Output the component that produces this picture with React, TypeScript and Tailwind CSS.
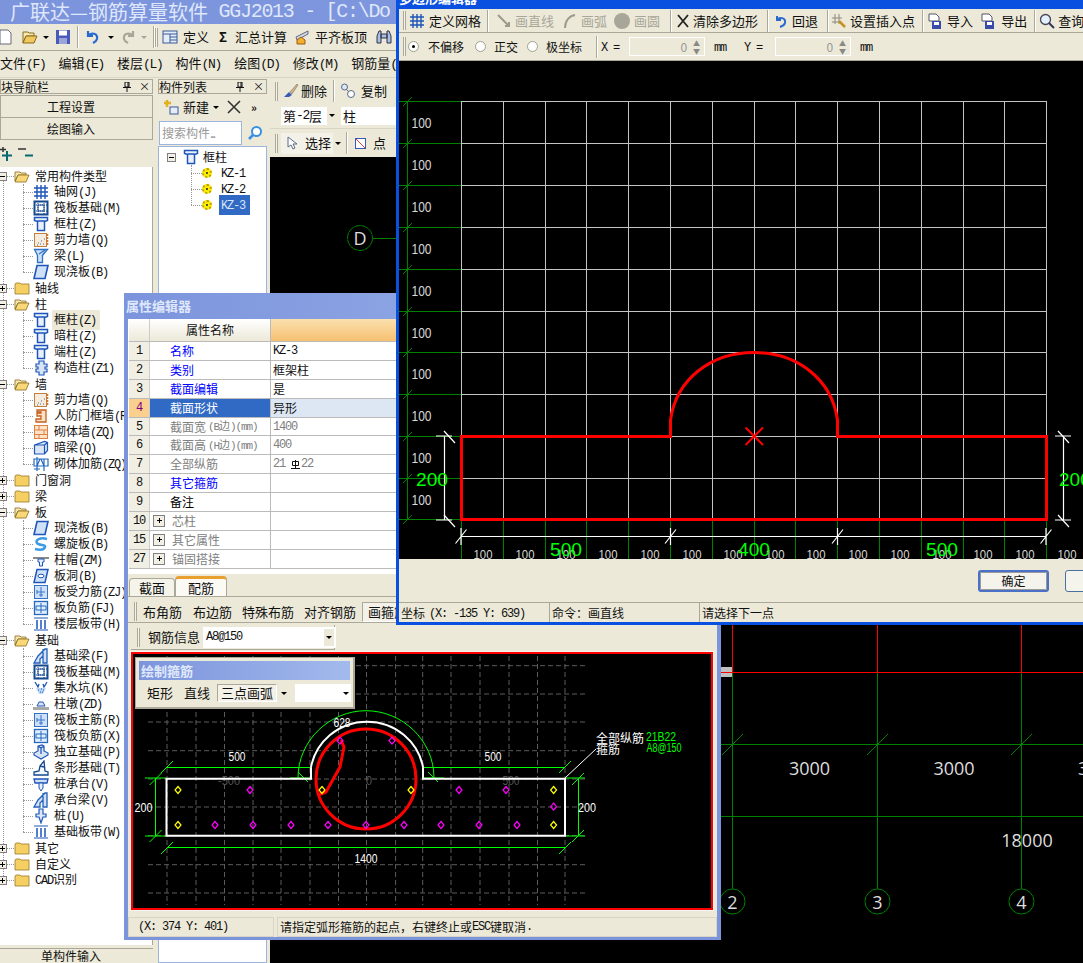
import React from 'react'

const M = ({ children }: { children: React.ReactNode }) => (
  <span className="whitespace-pre font-['Liberation_Mono',monospace] tracking-[-0.1em]">{children}</span>
)

const B = '#1f55b8'
const L = '#cfe0f8'

const icons: Record<string, React.ReactNode> = {
  grid: <path d="M4 1v14M8 1v14M12 1v14M1 4h14M1 8h14M1 12h14" stroke={B} strokeWidth="1.4" fill="none" />,
  raft: <g fill="none" stroke="#14488f"><rect x="1.5" y="1.5" width="13" height="13" strokeWidth="2" /><rect x="5" y="5" width="6" height="6" /><path d="M5 1v14M11 1v14M1 5h14M1 11h14" strokeDasharray="1 1" /></g>,
  column: <path d="M1.5 1.5h13v3l-3 1v9h-7v-9l-3-1zM4.500 5h7" fill="#e8f0fc" stroke={B} strokeWidth="1.5" />,
  wall: <g><rect x="1.500" y="1.500" width="12" height="13" fill="#f5ece0" stroke="#c08040" /><path d="M5 11h1M8 9h1M10 12h1M7 12h1M11 7h1M4 13h1" stroke="#666" /><path d="M14.500 2v12" stroke="#e07020" strokeWidth="1.500" strokeDasharray="2 1" /></g>,
  beam: <path d="M1.500 1.500h13l-5 6v7h-5v-7zM6 6l6-4M9 8l3-4" fill={L} stroke="#2c72c8" strokeWidth="1.300" />,
  slab: <path d="M4 1.500h11l-3 13H1z" fill={L} stroke={B} strokeWidth="1.600" />,
  construct: <path d="M6 1h5v3h3v3h-2v2h2v3h-3v3H6v-3H3V9h2V7H3V4h3z" fill="#d8e4f6" stroke={B} strokeWidth="1.200" />,
  door: <path d="M4 2h9v12H3v-3h5V8H4V5h4V4H4z" fill="#f7e2c8" stroke="#c8601c" strokeWidth="1.300" />,
  brick: <g fill="#fbe3cc" stroke="#e08040"><rect x="1.500" y="1.500" width="13" height="13" /><path d="M1 6h14M1 10.500h14M6 1.500V6M11 6v4.500M6 10.500v4" fill="none" /></g>,
  lintel: <path d="M1.500 5l10-3.500 3 1v8l-3 3.500h-10zM1.500 5h10v9M11.500 5l3-2.500" fill="#dbe7f7" stroke={B} strokeWidth="1.200" />,
  rebarwall: <path d="M1 3h14v7H1zM4 1v14M11 3v12M7 3l-3 7M8 3l3 7M1 13h6" fill="none" stroke="#2468c0" strokeWidth="1.200" />,
  spiral: <path d="M14 3C7 1 2 4 4 7s9 1 8 4-6 3-10 2" fill="none" stroke="#3d9be8" strokeWidth="2.500" />,
  cap: <g><path d="M0 5h16v2H0z" fill="#8a8a8a" /><path d="M5 7h6v3H9.500v4h-3v-4H5z" fill="#e6effb" stroke={B} /></g>,
  hole: <g><path d="M4 1.500h11l-3 13H1z" fill={L} stroke={B} strokeWidth="1.500" /><ellipse cx="8" cy="8" rx="3" ry="1.800" fill="#fff" stroke={B} /></g>,
  rebar1: <g fill="none" stroke="#3272c8"><rect x="1.500" y="1.500" width="13" height="13" fill={L} /><path d="M8 3v10M4 8h8M4 6v4M6 11h4" /></g>,
  rebarneg: <g fill="none" stroke="#2468c0"><rect x="1.500" y="1.500" width="13" height="13" fill="#e4eefb" strokeWidth="1.300" /><path d="M3 6h10M3 10h10M8 3v10M3 6v4M13 6v4" /></g>,
  strip: <g stroke={B} fill="none"><path d="M1 2h14M1 14h14" /><path d="M4 4v9M8 4v9M12 4v9" strokeWidth="1.500" /></g>,
  fbeam: <path d="M1 15l4-7 7-7h2v14h-4V8l-3 3v4zM10 1v7" fill={L} stroke="#2160b8" strokeWidth="1.300" />,
  pit: <g><path d="M2 2l3 5 1-3M14 2l-3 5-1-3" fill="none" stroke={B} strokeWidth="1.300" /><path d="M3 8h10l-3 6H6z" fill="#bcd6f5" /><path d="M5 10h1M8 9h1M10 10h1M7 12h1M9 12h1" stroke={B} /></g>,
  pier: <g><path d="M6 6h4l2 4H4z" fill="#d8e4f6" stroke={B} /><path d="M0 11h16v3H0z" fill="#a8a8a8" /></g>,
  isolated: <path d="M5 2l4-1 2 1v5l4 2v2l-7 4-7-4V9l4-2zM5 2l3 2v6M8 4l3-2" fill="#d8e4f6" stroke={B} strokeWidth="1.200" />,
  stripf: <path d="M1 15v-3l5-1 1-5 4-5 1 10 3 1v3zM7 6l4 1" fill="#f4f7fd" stroke="#14488f" strokeWidth="1.300" />,
  pilecap: <g><path d="M1 3h14l-1 4H2z" fill={L} stroke={B} strokeWidth="1.300" /><path d="M6 7h4v5l-2 3-2-3z" fill="#e6effb" stroke={B} /></g>,
  pile: <path d="M6 1h4v5h3v3h-3l-2 6-2-6H3V6h3z" fill="#dbe7f7" stroke={B} strokeWidth="1.200" />,
}

const Icon = ({ name }: { name: string }) => (
  <svg viewBox="0 0 16 16" className="h-4 w-4 shrink-0">{icons[name]}</svg>
)

const Folder = ({ open }: { open: boolean }) => (
  <svg viewBox="0 0 16 14" className="h-[14px] w-4 shrink-0">
    {open ? (
      <g stroke="#8a6a1c" strokeWidth="0.800">
        <path d="M1 3h5l1 1h5v2H4L1 12z" fill="#f6e8b0" />
        <path d="M4 6h11l-3 7H1z" fill="#f8d878" />
      </g>
    ) : (
      <path d="M1 3l1-1h4l1 1h8v10H1z" fill="#f6cf62" stroke="#9a7a28" strokeWidth="0.800" />
    )}
  </svg>
)

const Expander = ({ plus, className = '' }: { plus: boolean; className?: string }) => (
  <span className={`relative flex h-[9px] w-[9px] shrink-0 items-center justify-center border border-[#808080] bg-[#f2efe4] ${className}`}>
    <span className="h-px w-[5px] bg-black" />
    {plus && <span className="absolute h-[5px] w-px bg-black" />}
  </span>
)

type Child = [string, string, string]
type Group = { name: string; open?: boolean; items?: Child[] }

const tree: Group[] = [
  { name: '常用构件类型', open: true, items: [['grid', '轴网', '(J)'], ['raft', '筏板基础', '(M)'], ['column', '框柱', '(Z)'], ['wall', '剪力墙', '(Q)'], ['beam', '梁', '(L)'], ['slab', '现浇板', '(B)']] },
  { name: '轴线' },
  { name: '柱', open: true, items: [['column', '框柱', '(Z)'], ['column', '暗柱', '(Z)'], ['column', '端柱', '(Z)'], ['construct', '构造柱', '(Z1)']] },
  { name: '墙', open: true, items: [['wall', '剪力墙', '(Q)'], ['door', '人防门框墙', '(RF)'], ['brick', '砌体墙', '(ZQ)'], ['lintel', '暗梁', '(Q)'], ['rebarwall', '砌体加筋', '(ZQ)']] },
  { name: '门窗洞' },
  { name: '梁' },
  { name: '板', open: true, items: [['slab', '现浇板', '(B)'], ['spiral', '螺旋板', '(B)'], ['cap', '柱帽', '(ZM)'], ['hole', '板洞', '(B)'], ['rebar1', '板受力筋', '(ZJ)'], ['rebarneg', '板负筋', '(FJ)'], ['strip', '楼层板带', '(H)']] },
  { name: '基础', open: true, items: [['fbeam', '基础梁', '(F)'], ['raft', '筏板基础', '(M)'], ['pit', '集水坑', '(K)'], ['pier', '柱墩', '(ZD)'], ['rebar1', '筏板主筋', '(R)'], ['rebarneg', '筏板负筋', '(X)'], ['isolated', '独立基础', '(P)'], ['stripf', '条形基础', '(T)'], ['pilecap', '桩承台', '(V)'], ['fbeam', '承台梁', '(V)'], ['pile', '桩', '(U)'], ['strip', '基础板带', '(W)']] },
  { name: '其它' },
  { name: '自定义' },
  { name: 'CAD识别' },
]

const Grip = () => <span className="h-[19px] w-[3px] shrink-0 border-x border-[#aca899] bg-[#f6f4ea]" />
const Sep = ({ className = '' }: { className?: string }) => <span className={`h-[22px] w-0.5 shrink-0 border-x border-l-[#aca899] border-r-white ${className}`} />
const Caret = ({ className = '' }: { className?: string }) => <span className={`h-0 w-0 shrink-0 border-x-[3px] border-t-[3px] border-x-transparent border-t-black ${className}`} />

const PanelHead = ({ title, pin, close }: { title: string; pin: string; close: string }) => (
  <div className="relative flex h-[15px] shrink-0 items-center overflow-hidden border border-[#aca899] text-[12px] leading-none">
    <span>{title}</span>
    <svg viewBox="0 0 8 10" className={`absolute ${pin} h-[10px] w-2`}><path d="M2 0h4v5H2zM0 5.500h8M4 6v4M5 0v5" stroke="#111" fill="none" /></svg>
    <span className={`absolute ${close} text-[11px]`}>×</span>
  </div>
)

// cad text squeezed to the width it has in the picture
const Dim = ({ x, y, w, s = 13, fill = '#d8d8d8', children }: { x: number; y: number; w: number; s?: number; fill?: string; children: string }) => (
  <text x={x} y={y} textLength={w} lengthAdjust="spacingAndGlyphs" textAnchor="middle" dominantBaseline="central" fontSize={s} fill={fill} fontFamily="Liberation Sans, sans-serif">
    {children}
  </text>
)

const Tick = ({ x, y, r = 6, c = '#00ff00' }: { x: number; y: number; r?: number; c?: string }) => (
  <line x1={x - r} y1={y + r} x2={x + r} y2={y - r} stroke={c} strokeWidth="1" />
)

function MainCanvas() {
  const cols = [732.500, 877.500, 1021.500]
  return (
    <svg viewBox="270 157 813 806" className="h-full w-full">
      <circle cx="360" cy="238" r="12.500" fill="none" stroke="#008000" strokeDasharray="7 0.500" />
      <text x="360" y="238" textAnchor="middle" dominantBaseline="central" fontSize="18" fill="#ddd" fontFamily="Open Sans, sans-serif">D</text>
      <line x1="372.500" y1="238.500" x2="400" y2="238.500" stroke="#008000" />
      {[744.500, 816.500].map(y => <line key={y} x1="721" y1={y} x2="1083" y2={y} stroke="#008000" />)}
      {cols.map(x => (
        <g key={x}>
          <line x1={x} y1="625" x2={x} y2="672.500" stroke="#ff0000" />
          <line x1={x} y1="672.500" x2={x} y2="889" stroke="#008000" />
          <Tick x={x} y={744.500} r={10.500} c="#008000" />
          <circle cx={x} cy="901.500" r="12.500" fill="none" stroke="#008000" />
        </g>
      ))}
      <rect x="721" y="667" width="11" height="10" fill="#c0c0c0" />
      <line x1="721" y1="672.500" x2="1083" y2="672.500" stroke="#ff0000" />
      {[[809.500, '3000'], [954, '3000']].map(([x, t]) => (
        <text key={x} x={x} y="768" textAnchor="middle" dominantBaseline="central" fontSize="18" fill="#ddd" fontFamily="Open Sans, sans-serif">{t}</text>
      ))}
      <text x="1078" y="768" dominantBaseline="central" fontSize="18" fill="#ddd" fontFamily="Open Sans, sans-serif">3</text>
      <text x="1027" y="840" textAnchor="middle" dominantBaseline="central" fontSize="18" fill="#ddd" fontFamily="Open Sans, sans-serif">18000</text>
      {['2', '3', '4'].map((t, i) => (
        <text key={t} x={cols[i]} y="901.500" textAnchor="middle" dominantBaseline="central" fontSize="18" fill="#ddd" fontFamily="Open Sans, sans-serif">{t}</text>
      ))}
    </svg>
  )
}

function PolygonCanvas() {
  const xs = [461.500, 503.500, 545.500, 586.500, 628.500, 670.500, 712.500, 754.500, 795.500, 837.500, 879.500, 921.500, 963.500, 1004.500, 1046.500]
  const ys = [101.500, 143.500, 185.500, 227.500, 269.500, 311.500, 352.500, 394.500, 436.500, 478.500, 519.500]
  const bottom = [483, 525, 566, 608, 650, 692, 733, 775, 816, 858, 900, 942, 983, 1025, 1067]
  return (
    <svg viewBox="399 61 686 498" className="h-full w-full">
      <line x1="407.500" y1="101" x2="407.500" y2="520" stroke="#008000" />
      {ys.map((y, i) => (
        <g key={y}>
          <line x1="399" y1={y} x2="461" y2={y} stroke="#008000" />
          <line x1="461" y1={y} x2="1046.500" y2={y} stroke="#c4c4c4" />
          <Tick x={407.500} y={y} r={4.500} c="#008000" />
          {i < ys.length - 1 && <Dim x={421.500} y={y + 21} w={20} s={14}>100</Dim>}
        </g>
      ))}
      {xs.map(x => (
        <g key={x}>
          <line x1={x} y1="101" x2={x} y2="520" stroke="#c4c4c4" />
          <line x1={x} y1="520" x2={x} y2="559" stroke="#008000" />
        </g>
      ))}
      {bottom.map(x => <Dim key={x} x={x} y={554} w={19} s={13}>100</Dim>)}
      <path d="M461.500 436.500H670.500V420C676 380 710 352.500 754 352.500C798 352.500 832 380 837.500 420V436.500H1046.500V519.500H461.500Z" fill="none" stroke="#ff0000" strokeWidth="3" />
      <path d="M745.500 427.500l17.500 17.500M763 427.500l-17.500 17.500" stroke="#ff0000" strokeWidth="2" />
      <g stroke="#fff" strokeWidth="1.200">
        <line x1="461" y1="536.500" x2="1046" y2="536.500" />
        <line x1="444.500" y1="436" x2="444.500" y2="520" />
        <line x1="1063.500" y1="436" x2="1063.500" y2="520" />
        <path d="M436 436h16M436 520h16M1055 436h16M1055 520h16" />
        <path d="M444 431l11 12M444 515l11 12M1058 431l11 12M1058 515l11 12" />
        {[461, 670.500, 837.500, 1046].map(x => <path key={x} d={`M${x - 5.500} ${543.500}l11 -14M${x} 528v17`} />)}
      </g>
      <Dim x={566} y={549} w={32} s={19} fill="#00ff00">500</Dim>
      <Dim x={754} y={549} w={32} s={19} fill="#00ff00">400</Dim>
      <Dim x={942} y={549} w={32} s={19} fill="#00ff00">500</Dim>
      <Dim x={432} y={479} w={32} s={19} fill="#00ff00">200</Dim>
      <text x="1059" y="479" dominantBaseline="central" fontSize="19" fill="#00ff00" fontFamily="Liberation Sans, sans-serif">200</text>
    </svg>
  )
}

function SectionCanvas() {
  const vs = [167, 196, 224.500, 253, 281, 310, 338.500, 366.500, 395.600, 422.700, 451, 480, 509, 537.500, 565]
  const hs = [665.700, 694, 722, 750.700, 779, 807, 835.700, 864.700, 893]
  const yellow = [[178, 790], [178, 825], [322, 790], [411, 790], [553.600, 790], [553.600, 825]]
  const magenta = [[250, 790], [340, 740.700], [392, 740.700], [459, 790], [506, 790], [553.600, 806.700], [215, 825], [253, 825], [291, 825], [328, 825], [366, 825], [404, 825], [441, 825], [479, 825], [517, 825]]
  return (
    <svg viewBox="133 654 578 254" className="h-full w-full">
      <g stroke="#5c5c5c" strokeDasharray="5 3">
        {vs.map(x => <line key={x} x1={x} y1="656" x2={x} y2="905" />)}
        {hs.map(y => <line key={y} x1="148" y1={y} x2="585" y2={y} />)}
      </g>
      <Dim x={229} y={781} w={22} s={12} fill="#555">-500</Dim>
      <Dim x={369} y={781} w={6} s={12} fill="#555">0</Dim>
      <Dim x={511} y={781} w={17} s={12} fill="#555">500</Dim>
      <g fill="none" stroke="#00ff00">
        <path d="M167 767.500H311M423 767.500H565M167 847.500H565M155.500 778V836M578.500 778V836M145 778H166M145 836H166M566 778H585M566 836H585" />
        <path d="M298 778C298 740 330 710.700 366 710.700C402 710.700 434 740 434 778" />
        <path d="M290 778h22M422 778h22" />
      </g>
      {[[167, 767], [565, 767], [167, 848], [565, 848], [155.600, 779], [155.600, 836], [578, 779], [578, 836]].map(([x, y]) => <Tick key={`${x}${y}`} x={x} y={y} />)}
      <path d="M298 772l10 10M428 772l10 10" stroke="#00ff00" />
      <path d="M166.500 778.700H311V767C316 742 338 721.700 367 721.700C396 721.700 418 742 423 767V778.700H565V835.700H166.500Z" fill="none" stroke="#fff" strokeWidth="2" />
      <circle cx="366" cy="779" r="50" fill="none" stroke="#ff0000" strokeWidth="3" />
      <path d="M341 740L344 747L340 767L326 792L318 795" fill="none" stroke="#ff0000" strokeWidth="3" />
      {yellow.map(([x, y]) => <path key={`${x}${y}`} d={`M${x} ${y - 3.500}l3 3.500l-3 3.500l-3 -3.500z`} fill="none" stroke="#ffff00" strokeWidth="1.200" />)}
      {magenta.map(([x, y]) => <path key={`${x}${y}`} d={`M${x} ${y - 3.500}l3 3.500l-3 3.500l-3 -3.500z`} fill="none" stroke="#ff00ff" strokeWidth="1.200" />)}
      <line x1="565" y1="778" x2="596" y2="749" stroke="#fff" />
      <Dim x={237} y={756} w={17} s={13} fill="#fff">500</Dim>
      <Dim x={493} y={756} w={17} s={13} fill="#fff">500</Dim>
      <Dim x={342} y={722} w={17} s={13} fill="#fff">628</Dim>
      <Dim x={143.500} y={807} w={18} s={13} fill="#fff">200</Dim>
      <Dim x={587} y={807} w={18} s={13} fill="#fff">200</Dim>
      <Dim x={366} y={858} w={23} s={13} fill="#fff">1400</Dim>
      <text x="596" y="737" dominantBaseline="central" fontSize="12" fill="#fff">全部纵筋</text>
      <text x="596" y="748" dominantBaseline="central" fontSize="12" fill="#fff">箍筋</text>
      <Dim x={661} y={737} w={30} s={12} fill="#00ff00">21B22</Dim>
      <Dim x={664} y={748} w={35} s={12} fill="#00ff00">A8@150</Dim>
    </svg>
  )
}

const rows: { n: string; name: string; value?: React.ReactNode; tone: string; plus?: boolean; active?: boolean; valueTone?: string }[] = [
  { n: '1', name: '名称', value: <M>KZ-3</M>, tone: 'text-[#0000ff]' },
  { n: '2', name: '类别', value: '框架柱', tone: 'text-[#0000ff]' },
  { n: '3', name: '截面编辑', value: '是', tone: 'text-[#0000ff]' },
  { n: '4', name: '截面形状', value: '异形', tone: 'text-white', active: true },
  { n: '5', name: '截面宽', value: <M>1400</M>, tone: 'text-[#808080]', valueTone: 'text-[#808080]' },
  { n: '6', name: '截面高', value: <M>400</M>, tone: 'text-[#808080]', valueTone: 'text-[#808080]' },
  {
    n: '7',
    name: '全部纵筋',
    value: (
      <>
        <M>21 </M>
        <svg viewBox="0 0 9 9" className="mr-px h-[9px] w-[9px]"><path d="M1.500 1.500h6v4h-6zM4.500 0v8.500M0 8.500h9" fill="none" stroke="#111" /></svg>
        <M>22</M>
      </>
    ),
    tone: 'text-[#808080]',
    valueTone: 'text-[#808080]',
  },
  { n: '8', name: '其它箍筋', tone: 'text-[#0000ff]' },
  { n: '9', name: '备注', tone: 'text-black' },
  { n: '10', name: '芯柱', tone: 'text-[#808080]', plus: true },
  { n: '15', name: '其它属性', tone: 'text-[#808080]', plus: true },
  { n: '27', name: '锚固搭接', tone: 'text-[#808080]', plus: true },
]

function PropertyWindow() {
  return (
    <div className="absolute left-[124px] top-[293px] flex h-[647px] w-[597px] flex-col border-x-4 border-b-[3px] border-[#7c94dc] bg-[#ece9d8]">
      <div className="-ml-[2px] flex h-[26px] shrink-0 items-center bg-gradient-to-r from-[#7c94dc] to-[#9db5ea] text-[13px] font-bold text-[#dfe7fb]">属性编辑器</div>
      <div className="h-[255px] shrink-0 bg-white pl-px">
        <div className="flex h-[23px] border-b border-[#bbb]">
          <div className="w-[21px] border-r border-[#ccc] bg-gradient-to-b from-white to-[#ece9d8]" />
          <div className="flex w-[121px] items-center justify-center border-r border-[#bbb] bg-gradient-to-b from-white to-[#ece9d8] text-[12px]">属性名称</div>
          <div className="flex-1 bg-gradient-to-b from-[#fbe0ae] to-[#f6c070]" />
        </div>
        {rows.map(r => (
          <div key={r.n} className="flex h-[18.9px] border-b border-[#bbb] text-[12px]">
            <div className={`flex w-[21px] items-center justify-center border-r border-[#ccc] ${r.active ? 'bg-[#fbd08f] text-[#800080]' : 'bg-[#f1efe4]'}`}><M>{r.n}</M></div>
            <div className={`flex w-[121px] items-center border-r border-[#bbb] ${r.active ? 'bg-[#316ac5]' : ''} ${r.tone}`}>
              {r.plus ? (
                <Expander plus className="ml-[3px] mr-[7px] !h-[12px] !w-[12px]" />
              ) : (
                <span className="w-[20px] shrink-0" />
              )}
              {r.name}
              {r.n === '5' && <span className="ml-0.5 text-[11px]"><M>(B</M>边<M>)(mm)</M></span>}
              {r.n === '6' && <span className="ml-0.5 text-[11px]"><M>(H</M>边<M>)(mm)</M></span>}
            </div>
            <div className={`flex flex-1 items-center pl-0.5 ${r.active ? 'bg-[#dde7f3]' : ''} ${r.valueTone ?? ''}`}>{r.value}</div>
          </div>
        ))}
      </div>
      <div className="mt-[3px] flex h-[20px] shrink-0 items-end border-b border-[#aca899] pl-px text-[13px]">
        <div className="flex h-[18px] w-[46px] items-center justify-center rounded-t border border-b-0 border-[#aca899] bg-[#f5f4ea]">截面</div>
        <div className="flex h-[20px] w-[52px] items-center justify-center rounded-t border-t-[3px] border-x border-[#e8a030] border-x-[#aca899] bg-[#fbfaf4]">配筋</div>
      </div>
      <div className="mt-1 flex h-[22px] shrink-0 items-center border-b border-[#aca899] pl-[6px] text-[13px]">
        <Grip />
        <span className="ml-[6px]">布角筋</span>
        <span className="ml-[11px]">布边筋</span>
        <span className="ml-[10px]">特殊布筋</span>
        <span className="ml-[10px]">对齐钢筋</span>
        <span className="ml-1.5 flex h-[20px] items-center border border-white border-l-[#aca899] border-t-[#aca899] bg-[#f4f2e8] px-[5px]">画箍筋</span>
      </div>
      <div className="ml-[3px] mt-0.5 flex h-[25px] w-[204px] shrink-0 items-center border-b border-r border-[#aca899] pl-[6px] text-[13px]">
        <Grip />
        <span className="ml-2">钢筋信息</span>
        <div className="ml-[3px] flex h-[21px] w-[133px] shrink-0 items-center justify-between bg-white pl-[3px] pr-[2px] text-[12px]">
          <M>A8@150</M>
          <span className="flex h-[17px] w-[10px] items-center justify-center bg-[#ece9d8]"><Caret /></span>
        </div>
      </div>
      <div className="relative ml-[3px] mt-0.5 h-[258px] w-[582px] shrink-0 border-2 border-[#ff0000] bg-black outline outline-1 outline-[#f4f4f4]">
        <SectionCanvas />
        <div className="absolute left-[2px] top-[3px] h-[52px] w-[220px] border border-b-2 border-r-2 border-[#aca899] bg-[#ece9d8] p-[3px]">
          <div className="flex h-[19px] items-center bg-gradient-to-r from-[#7c94dc] to-[#a2baec] pl-0.5 text-[13px] font-bold text-[#dfe7fb]">绘制箍筋</div>
          <div className="flex h-[26px] items-center pl-[8px] text-[13px]">
            <span>矩形</span>
            <span className="ml-[11px]">直线</span>
            <span className="ml-[7px] flex h-[18px] w-[60px] shrink-0 items-center justify-center border border-white border-l-[#aca899] border-t-[#aca899] bg-[#f4f2e8]">三点画弧</span>
            <Caret className="ml-1" />
            <div className="ml-2 flex h-[18px] w-[56px] shrink-0 items-center justify-end bg-white pr-0.5"><Caret /></div>
          </div>
        </div>
      </div>
      <div className="mt-[7px] flex h-[20px] shrink-0 text-[12px]">
        <div className="flex w-[146px] items-center border border-[#d8d5c4] pl-[9px]"><M>(X: 374 Y: 401)</M></div>
        <div className="ml-[3px] flex flex-1 items-center border border-[#d8d5c4] pl-0.5">请指定弧形箍筋的起点，右键终止或<M>ESC</M>键取消<M>.</M></div>
      </div>
    </div>
  )
}

const GridIcon = () => <svg viewBox="0 0 16 16" className="h-4 w-4">{icons.grid}</svg>

function PolygonWindow() {
  return (
    <div className="absolute left-[396px] top-[-14px] flex h-[639px] w-[692px] flex-col border-x-[3px] border-b-[3px] border-[#0a50e0] bg-[#ece9d8]">
      <div className="flex h-[23px] shrink-0 items-center bg-[#0a50e0] text-[13px] font-bold text-white">多边形编辑器</div>
      <div className="flex h-[24px] shrink-0 items-center border-b border-[#aca899] pl-[4px] text-[13px]">
        <Grip />
        <span className="ml-[3px]"><GridIcon /></span>
        <span className="ml-1">定义网格</span>
        <Sep className="ml-1.5" />
        <svg viewBox="0 0 16 16" className="ml-[7px] h-4 w-4"><path d="M2 2l10 10M9 13h4V9" stroke="#9c9a8c" strokeWidth="2" fill="none" /></svg>
        <span className="ml-[3px] text-[#a8a698]">画直线</span>
        <svg viewBox="0 0 16 16" className="ml-[8px] h-4 w-4"><path d="M3 15C3 8 7 3 13 2" stroke="#9c9a8c" strokeWidth="2" fill="none" /></svg>
        <span className="ml-[3px] text-[#a8a698]">画弧</span>
        <span className="ml-[7px] h-4 w-4 rounded-full bg-[#a8a698]" />
        <span className="ml-1 text-[#a8a698]">画圆</span>
        <Sep className="ml-[10px]" />
        <svg viewBox="0 0 16 16" className="ml-[3px] h-4 w-4"><path d="M3 2l10 12M13 2L3 14" stroke="#222" strokeWidth="1.800" /></svg>
        <span className="ml-[2px]">清除多边形</span>
        <Sep className="ml-[9px]" />
        <svg viewBox="0 0 16 16" className="ml-1 h-4 w-4"><path d="M4 3v4h4M4 7c2-3 9-3 8 3-.5 2-2 3-5 4" stroke="#2a6ad0" strokeWidth="2" fill="none" /></svg>
        <span className="ml-[3px]">回退</span>
        <Sep className="ml-[9px]" />
        <svg viewBox="0 0 16 16" className="ml-[2px] h-4 w-4"><path d="M1 5h10M1 9h8M4 1v10M8 1v10" stroke="#8a8a7c" fill="none" /><path d="M8 8l6 6" stroke="#c89020" strokeWidth="2.500" /></svg>
        <span className="ml-[3px]">设置插入点</span>
        <Sep className="ml-[7px]" />
        <svg viewBox="0 0 16 16" className="ml-[3px] h-4 w-4"><path d="M2 1h7l3 3v4H2z" fill="#fff" stroke="#556" /><rect x="5" y="8" width="9" height="8" fill="#3a4aa8" /><rect x="7" y="9" width="5" height="3" fill="#fff" /></svg>
        <span className="ml-1">导入</span>
        <svg viewBox="0 0 16 16" className="ml-[7px] h-4 w-4"><path d="M2 1h7l3 3v4H2z" fill="#fff" stroke="#556" /><rect x="5" y="8" width="9" height="8" fill="#3a4aa8" /><rect x="7" y="9" width="5" height="3" fill="#fff" /></svg>
        <span className="ml-[5px]">导出</span>
        <Sep className="ml-[7px]" />
        <svg viewBox="0 0 16 16" className="ml-[3px] h-4 w-4"><circle cx="6.500" cy="6.500" r="5" fill="#e4f0ff" stroke="#445" strokeWidth="1.300" /><path d="M10 10l5 5" stroke="#335" strokeWidth="2" /></svg>
        <span className="ml-[3px]">查询</span>
      </div>
      <div className="flex h-[28px] shrink-0 items-center border-b border-[#aca899] pl-[4px] text-[12px]">
        <Grip />
        <span className="ml-[2px] flex h-[11px] w-[11px] items-center justify-center rounded-full border border-[#a0a090] bg-white"><span className="h-[3px] w-[3px] rounded-full bg-black" /></span>
        <span className="ml-[9px]">不偏移</span>
        <span className="ml-[11px] h-[11px] w-[11px] rounded-full border border-[#a0a090] bg-white" />
        <span className="ml-[8px]">正交</span>
        <span className="ml-[9px] h-[11px] w-[11px] rounded-full border border-[#a0a090] bg-white" />
        <span className="ml-[8px]">极坐标</span>
        <Sep className="ml-[14px]" />
        <span className="ml-[3px] w-[28px]"><M>X =</M></span>
        <div className="flex h-[19px] w-[76px] items-center justify-end border border-white pr-[4px] text-[#999]">
          <span>0</span><span className="ml-[6px] text-[7px] leading-[8px] text-[#888]">▲<br />▼</span>
        </div>
        <span className="ml-[9px] w-[30px]"><M>mm</M></span>
        <span className="w-[31px]"><M>Y =</M></span>
        <div className="flex h-[19px] w-[76px] items-center justify-end border border-white pr-[4px] text-[#999]">
          <span>0</span><span className="ml-[6px] text-[7px] leading-[8px] text-[#888]">▲<br />▼</span>
        </div>
        <span className="ml-[9px]"><M>mm</M></span>
      </div>
      <div className="h-[498px] shrink-0 bg-black"><PolygonCanvas /></div>
      <div className="flex h-[43px] shrink-0 items-center pl-[579px] text-[12px]">
        <button className="h-[22px] w-[71px] shrink-0 rounded-[3px] border-2 border-[#4a70c8] bg-[#f4f3ec] shadow-[inset_0_0_0_1px_#999] outline-none">确定</button>
        <span className="ml-[16px] h-[22px] w-[40px] shrink-0 rounded-[3px] border border-[#4a70a0] bg-[#f4f3ec]" />
      </div>
      <div className="flex h-[20px] shrink-0 gap-[3px] border-t border-[#aca899] text-[12px]">
        <div className="flex w-[147px] items-center pl-0.5">坐标<span className="ml-1"><M>(X: -135 Y: 639)</M></span></div>
        <div className="flex w-[147px] items-center border-l border-[#aca899] pl-0.5">命令：画直线</div>
        <div className="flex flex-1 items-center border-l border-[#aca899] pl-0.5">请选择下一点</div>
      </div>
    </div>
  )
}

export default function App() {
  return (
    <div className="relative h-[963px] w-[1083px] overflow-hidden whitespace-nowrap bg-[#ece9d8] font-['Noto_Sans_CJK_SC',sans-serif] text-[#111]">
      <div className="flex h-full flex-col">
        <div className="flex h-6 shrink-0 items-center overflow-hidden bg-gradient-to-r from-[#7c94dc] to-[#7f99e0] pl-[10px] text-[20px] leading-none text-[#dfe7fb]">
          广联达—钢筋算量软件<span className="whitespace-pre font-['Liberation_Mono',monospace] tracking-[-1.3px]"> GGJ2013 - [C:\Do</span>
        </div>
        <div className="flex h-[27px] shrink-0 items-center border-b border-[#aca899] text-[13px]">
          <svg viewBox="0 0 16 16" className="-ml-[3px] h-4 w-4"><path d="M3 1h8l3 3v11H3z" fill="#fff" stroke="#667" /></svg>
          <svg viewBox="0 0 16 16" className="ml-[9px] h-4 w-4"><path d="M1 3h5l1 1h5v3H4l-3 7z" fill="#f6e8b0" stroke="#8a6a1c" /><path d="M4 7h11l-3 7H1z" fill="#f0c860" stroke="#8a6a1c" /></svg>
          <Caret className="ml-[5px]" />
          <svg viewBox="0 0 16 16" className="ml-[6px] h-4 w-4"><rect x="1" y="1" width="14" height="14" fill="#4a5ab8" /><rect x="4" y="1.500" width="8" height="5" fill="#fff" /><rect x="4" y="9" width="8" height="6" fill="#9aa4d8" /></svg>
          <Sep className="ml-[6px]" />
          <svg viewBox="0 0 16 16" className="ml-1.5 h-4 w-4"><path d="M3 2v5h5M3 7c3-4 10-3 9 3-.5 2-2 3-4 4" stroke="#2a6ad0" strokeWidth="2.200" fill="none" /></svg>
          <Caret className="ml-[7px]" />
          <svg viewBox="0 0 16 16" className="ml-1.5 h-4 w-4"><path d="M13 2v5H8M13 7c-3-4-10-3-9 3 .5 2 2 3 4 4" stroke="#a8a698" strokeWidth="2.200" fill="none" /></svg>
          <span className="ml-[5px] h-0 w-0 border-x-[3px] border-t-[3px] border-x-transparent border-t-[#a8a698]" />
          <Sep className="ml-[6px]" />
          <Grip />
          <svg viewBox="0 0 16 16" className="ml-1 h-4 w-4"><rect x="1" y="2" width="14" height="12" fill="#e4ecf8" stroke="#3a5a98" /><path d="M1 5h14M8 5v9M8 8h7M8 11h7" stroke="#3a5a98" /></svg>
          <span className="ml-[5px]">定义</span>
          <span className="ml-[10px] font-bold">Σ</span>
          <span className="ml-[8px]">汇总计算</span>
          <svg viewBox="0 0 16 16" className="ml-[7px] h-4 w-4"><path d="M2 8l12-6v3L3 11z" fill="#d0d8e8" stroke="#667" /><path d="M3 11l4-3 4 3v4H3z" fill="#f0b030" stroke="#a05a10" /></svg>
          <span className="ml-[5px]">平齐板顶</span>
          <svg viewBox="0 0 16 16" className="ml-[9px] h-4 w-4"><path d="M1 7l2-5h2v12H1zM15 7l-2-5h-2v12h4zM5 5h6v4H5z" fill="#a8c0e8" stroke="#334" /></svg>
        </div>
        <div className="flex h-[27px] shrink-0 items-center gap-[13px] border-b border-[#d8d5c4] text-[13px]">
          {[['文件', '(F)'], ['编辑', '(E)'], ['楼层', '(L)'], ['构件', '(N)'], ['绘图', '(D)'], ['修改', '(M)'], ['钢筋量', '(Q)']].map(([a, b]) => (
            <span key={a}>{a}<M>{b}</M></span>
          ))}
        </div>
        <div className="mt-px flex min-h-0 flex-1">
          {/* navigation panel */}
          <div className="flex w-[153px] shrink-0 flex-col">
            <PanelHead title="块导航栏" pin="left-[122px]" close="left-[138px]" />
            <div className="mt-px flex h-[23px] shrink-0 items-center justify-center border border-[#aca899] pr-[11px] text-[12px]">工程设置</div>
            <div className="flex h-[22px] shrink-0 items-center justify-center border border-t-0 border-[#aca899] pr-[11px] text-[12px]">绘图输入</div>
            <div className="flex h-[27px] shrink-0 items-center">
              <svg viewBox="0 0 36 16" className="h-4 w-9">
                <path d="M0 3.500h6M3 1v5M18 3h8" stroke="#333" strokeWidth="1.500" fill="none" />
                <path d="M2 9.500h10M7 5v10M25 9.500h8" stroke="#086a70" strokeWidth="2" fill="none" />
              </svg>
            </div>
            <div className="relative h-[778px] shrink-0 overflow-hidden border-r border-[#aca899] bg-white pt-px text-[12px]">
              <span className="absolute left-[3px] top-[9px] h-[704px] border-l border-dotted border-[#999]" />
              {tree.map(g => (
                <div key={g.name} className="relative">
                  <div className="flex h-4 items-center">
                    <Expander plus={!g.open} className="-ml-[2px]" />
                    <span className="w-[7px] border-t border-dotted border-[#999]" />
                    <Folder open={!!g.open} />
                    <span className="ml-[5px]">{g.name === 'CAD识别' ? <><M>CAD</M>识别</> : g.name}</span>
                  </div>
                  {g.items && (
                    <div className="relative">
                      <span className="absolute left-[23px] top-0 border-l border-dotted border-[#999]" style={{ height: g.items.length * 16 - 8 }} />
                      {g.items.map(([ic, name, code]) => (
                        <div key={name + code} className="flex h-4 items-center pl-[23px]">
                          <span className="w-[10px] border-t border-dotted border-[#999]" />
                          <Icon name={ic} />
                          <span className={`ml-[3px] pl-[2px] pr-1 ${g.name === '柱' && name === '框柱' ? 'bg-[#ece9d8]' : ''}`}>{name}<M>{code}</M></span>
                        </div>
                      ))}
                    </div>
                  )}
                </div>
              ))}
            </div>
            <div className="mt-[3px] flex min-h-0 flex-1 items-center justify-center border-t border-[#aca899] pr-[11px] text-[12px]">单构件输入</div>
          </div>
          {/* component list */}
          <div className="ml-[5px] flex w-[109px] shrink-0 flex-col">
            <PanelHead title="构件列表" pin="left-[77px]" close="left-[94px]" />
            <div className="flex h-[26px] shrink-0 items-center pl-[5px] text-[13px]">
              <svg viewBox="0 0 16 16" className="h-4 w-4"><path d="M4 1v7M1 4h7" stroke="#e0b020" strokeWidth="2.500" /><rect x="7" y="8" width="8" height="7" fill="#e4ecf8" stroke="#3a5a98" /></svg>
              <span className="ml-[4px]">新建</span>
              <Caret className="ml-[4px]" />
              <svg viewBox="0 0 16 16" className="ml-[7px] h-4 w-4"><path d="M2 2l12 12M14 2L2 14" stroke="#333" strokeWidth="1.600" /></svg>
              <span className="ml-[9px] text-[11px] font-bold leading-none">»</span>
            </div>
            <div className="flex h-[26px] shrink-0 items-center pl-px">
              <div className="flex h-[24px] w-[83px] items-center border border-[#9db5dc] bg-white pl-0.5 text-[12px] text-[#999]">搜索构件<span className="tracking-[-2px]">...</span></div>
              <svg viewBox="0 0 16 16" className="ml-[5px] h-4 w-4"><circle cx="9.500" cy="6.500" r="4.500" fill="#fff" stroke="#3a90e0" strokeWidth="2" /><path d="M6 10l-4 4" stroke="#3a90e0" strokeWidth="2.500" /></svg>
            </div>
            <div className="flex-1 border border-[#9db5dc] bg-white pt-[2px] text-[12px]">
              <div className="flex h-4 items-center pl-2">
                <Expander plus={false} />
                <span className="ml-[7px]"><Icon name="column" /></span>
                <span className="ml-1">框柱</span>
              </div>
              <div className="relative ml-[32px]">
                <span className="absolute left-0 top-0 h-[40px] border-l border-dotted border-[#999]" />
                {['KZ-1', 'KZ-2', 'KZ-3'].map((k, i) => (
                  <div key={k} className="flex h-4 items-center">
                    <span className="w-[11px] border-t border-dotted border-[#999]" />
                    <span className="flex h-[10px] w-[10px] items-center justify-center rounded-full border-2 border-dotted border-[#b8a000] bg-[#ffee00]"><span className="h-0.5 w-0.5 bg-[#554]" /></span>
                    <span className={`ml-[7px] px-[2px] ${i === 2 ? 'w-[31px] bg-[#316ac5] text-[#d8e4f8]' : ''}`}><M>{k}</M></span>
                  </div>
                ))}
              </div>
            </div>
          </div>
          {/* drawing area */}
          <div className="ml-[3px] flex min-w-0 flex-1 flex-col">
            <div className="flex h-[24px] shrink-0 items-center pl-[5px] text-[13px]">
              <Grip />
              <svg viewBox="0 0 16 16" className="ml-[5px] h-4 w-4"><path d="M1 14l5-5 3 3-3 2z" fill="#3a5ab8" /><path d="M7 9l7-8 1 1-6 9z" fill="#d0b080" stroke="#666" strokeWidth="0.500" /></svg>
              <span className="ml-[2px]">删除</span>
              <Sep className="ml-[6px]" />
              <svg viewBox="0 0 16 16" className="ml-[5px] h-4 w-4"><circle cx="4.500" cy="4" r="3" fill="#dbe7f7" stroke="#5a6a88" /><circle cx="11" cy="11" r="3.500" fill="#fff" stroke="#5a6a88" /><path d="M6 6l3 3" stroke="#5a6a88" /></svg>
              <span className="ml-[5px]">复制</span>
            </div>
            <div className="flex h-[25px] shrink-0 items-center pl-[11px] text-[13px]">
              <div className="flex h-[18px] w-[46px] items-center bg-white pl-[2px]">第<M>-2</M>层</div>
              <span className="flex h-[18px] w-[10px] items-center justify-center"><Caret /></span>
              <div className="ml-1 flex h-[18px] w-[60px] items-center bg-white pl-[2px]">柱</div>
            </div>
            <div className="flex h-[29px] shrink-0 items-center border-t border-[#d8d5c4] pl-[5px] text-[13px]">
              <Grip />
              <span className="ml-[3px] flex h-[21px] w-[52px] items-center bg-[#f4f2e8] pl-[5px]">
                <svg viewBox="0 0 12 14" className="h-[14px] w-3"><path d="M2 1v10l3-2 2 4 2-1-2-4h4z" fill="#fff" stroke="#5a6a88" /></svg>
                <span className="ml-[7px]">选择</span>
              </span>
              <Caret className="ml-[2px]" />
              <Sep className="ml-[5px]" />
              <span className="ml-[7px] h-[11px] w-[11px] border border-[#3a5ab8] bg-[linear-gradient(45deg,#fff_45%,#e04040_45%,#e04040_55%,#fff_55%)]" />
              <span className="ml-[7px]">点</span>
            </div>
            <div className="min-h-0 flex-1 bg-black"><MainCanvas /></div>
          </div>
        </div>
      </div>
      <PropertyWindow />
      <PolygonWindow />
    </div>
  )
}
